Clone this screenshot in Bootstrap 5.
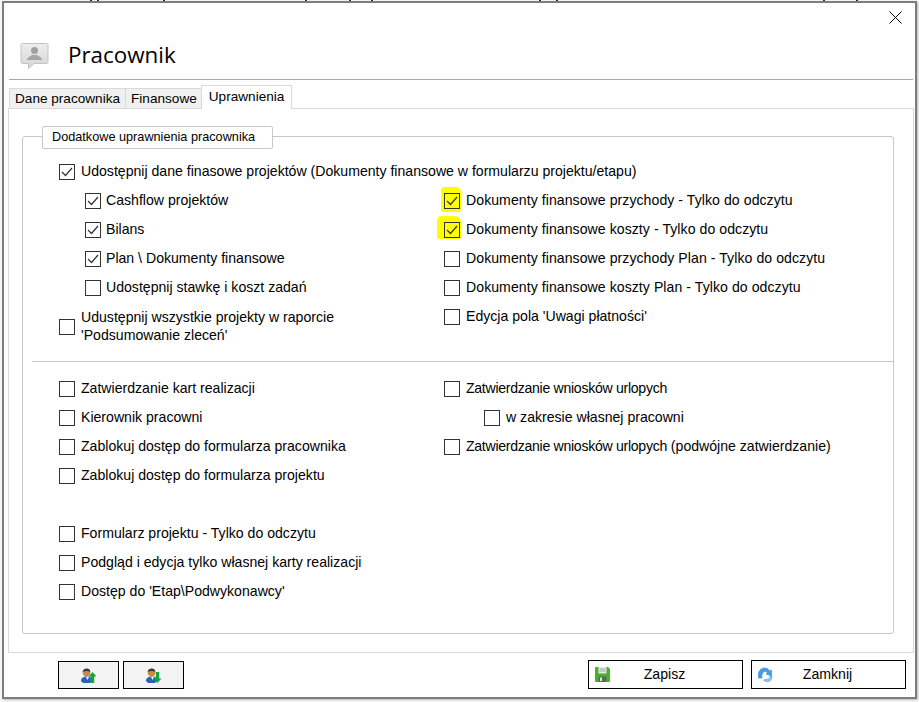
<!DOCTYPE html>
<html lang="pl">
<head>
<meta charset="utf-8">
<title>Pracownik</title>
<link href="https://cdn.jsdelivr.net/npm/bootstrap@5.3.0/dist/css/bootstrap.min.css" rel="stylesheet">
<style>
html,body{height:100%;}
body{background:#f7f7f7;font-family:"Liberation Sans",Arial,sans-serif;font-size:14.1px;color:#000;padding:1px 0 0 2px;overflow:hidden;position:relative;}
.mk{position:absolute;top:0;width:2px;height:1px;background:#1b2a6b;}
.win{position:relative;width:915px;height:698px;background:#fff;border:2px solid #7d7d7d;box-shadow:1px 1px 2px rgba(0,0,0,.25);}
.closex{height:31px;padding:8px 13px 0 0;}
.headrow{height:46px;border-bottom:1px solid #a9a9a9;margin:0 2px 0 5px;padding:0 0 0 11px;}
.headrow h1{font-family:"Open Sans",sans-serif;font-size:22.4px;font-weight:400;margin:0 0 2px 18px;}
.tabstrip{margin:6px 0 0 5px;height:22px;font-size:13.6px;}
.tabi{background:#f0f0f0;border:1px solid #d9d9d9;border-bottom:0;border-left-width:0;height:20px;margin-top:2px;padding:0 5px;line-height:20px;white-space:nowrap;}
.tabi:first-child{border-left-width:1px;}
.tabi.on{background:#fff;height:24px;margin:-1px 0 0 -2px;position:relative;z-index:1;padding:0 7px;line-height:21px;border-left-width:1px;}
.tabpanel{margin:0 1px 0 4px;height:545px;border:1px solid #d9d9d9;padding:27px 19px 0 13px;}
.groupb{position:relative;height:498px;border:1px solid #c8c8c8;border-radius:3px;padding:27px 0 0 36px;}
.legendb{position:absolute;left:19px;top:-11px;width:231px;height:23px;background:#fff;border:1px solid #c8c8c8;border-radius:2px;padding-left:9px;line-height:21px;white-space:nowrap;font-size:12.7px;}
.rowc{height:29px;}
.colL{width:385px;}
.ind{padding-left:26px;}
.ind .chk{gap:5px;}
.subr{padding-left:40px;}
.chk{display:flex;align-items:center;gap:6px;height:16px;white-space:nowrap;position:relative;}
.bx{width:16px;height:16px;border:1px solid #333;background:#fff;flex:none;display:flex;align-items:center;justify-content:center;position:relative;}
.bx svg{display:block;}
.bx.yl{background:#ffff00;}
.hla,.hlb{position:absolute;background:#ffff00;}
.hla{left:-3px;top:-6px;width:20px;height:25px;border-radius:3px 5px 2px 2px;}
.hlb{left:-7px;top:-6px;width:24px;height:23px;border-radius:5px 6px 2px 2px;}
.tall{height:52px;}
.tall .two{height:36px;line-height:18px;}
.twotxt{margin-top:-2px;}
.wide{letter-spacing:.055px;}
.tight{letter-spacing:-.29px;}
.sep{height:1px;background:#c8c8c8;margin:0 0 19px -27px;width:861px;}
.gapr{height:29px;}
.foot{padding:7px 0 0 54px;}
.bt{border:1px solid #000;display:flex;align-items:center;justify-content:center;position:relative;}
.bt.sm{width:61px;height:28px;margin-top:1px;background:#f3f3f3;}
.bt.lg{width:155px;height:29px;background:#fff;padding-right:2px;}
.bt.lg svg{position:absolute;left:6px;top:6px;}
.gaps{width:396px;}
</style>
</head>
<body>
<i class="mk" style="left:90px"></i><i class="mk" style="left:97px"></i><i class="mk" style="left:163px"></i><i class="mk" style="left:305px"></i><i class="mk" style="left:349px"></i><i class="mk" style="left:371px"></i><i class="mk" style="left:539px"></i><i class="mk" style="left:556px"></i><i class="mk" style="left:823px"></i><i class="mk" style="left:856px"></i>
<div class="win d-flex flex-column">
  <div class="closex d-flex justify-content-end">
    <svg width="13" height="13" viewBox="0 0 13 13"><path d="M.5.500l12 12M12.500.500l-12 12" stroke="#000" fill="none"/></svg>
  </div>
  <div class="headrow d-flex align-items-center">
    <svg width="30" height="30" viewBox="0 0 30 30"><defs><linearGradient id="g" x1="0" y1="0" x2="0" y2="1"><stop offset="0" stop-color="#eeeeee"/><stop offset="1" stop-color="#d4d4d4"/></linearGradient></defs><path d="M2.500 1.500h24a1.500 1.500 0 0 1 1.500 1.500v17a1.500 1.500 0 0 1-1.500 1.500H14l-5.500 5v-5h-6a1.500 1.500 0 0 1-1.500-1.500V3a1.500 1.500 0 0 1 1.500-1.500z" fill="url(#g)" stroke="#c4c4c4"/><circle cx="14.500" cy="8.500" r="3.500" fill="#a0a0a0"/><path d="M7 18c0-3 3.500-3.500 5-5h5c1.500 1.500 5 2 5 5z" fill="#a6a6a6"/></svg>
    <h1>Pracownik</h1>
  </div>
  <div class="tabstrip d-flex">
    <div class="tabi">Dane pracownika</div>
    <div class="tabi">Finansowe</div>
    <div class="tabi on">Uprawnienia</div>
  </div>
  <div class="tabpanel">
    <div class="groupb">
      <div class="legendb">Dodatkowe uprawnienia pracownika</div>
      <div class="rowc"><label class="chk"><span class="bx"><svg width="12" height="10" viewBox="0 0 12 10"><path d="M1 5l3.500 3.500L11 1" fill="none" stroke="#333" stroke-width="1.200"/></svg></span>Udostępnij dane finasowe projektów (Dokumenty finansowe w formularzu projektu/etapu)</label></div>
      <div class="rowc d-flex">
        <div class="colL ind"><label class="chk"><span class="bx"><svg width="12" height="10" viewBox="0 0 12 10"><path d="M1 5l3.500 3.500L11 1" fill="none" stroke="#333" stroke-width="1.200"/></svg></span>Cashflow projektów</label></div>
        <div><label class="chk wide"><span class="hla"></span><span class="bx yl"><svg width="12" height="10" viewBox="0 0 12 10"><path d="M1 5l3.500 3.500L11 1" fill="none" stroke="#333" stroke-width="1.200"/></svg></span>Dokumenty finansowe przychody - Tylko do odczytu</label></div>
      </div>
      <div class="rowc d-flex">
        <div class="colL ind"><label class="chk"><span class="bx"><svg width="12" height="10" viewBox="0 0 12 10"><path d="M1 5l3.500 3.500L11 1" fill="none" stroke="#333" stroke-width="1.200"/></svg></span>Bilans</label></div>
        <div><label class="chk wide"><span class="hlb"></span><span class="bx yl"><svg width="12" height="10" viewBox="0 0 12 10"><path d="M1 5l3.500 3.500L11 1" fill="none" stroke="#333" stroke-width="1.200"/></svg></span>Dokumenty finansowe koszty - Tylko do odczytu</label></div>
      </div>
      <div class="rowc d-flex">
        <div class="colL ind"><label class="chk"><span class="bx"><svg width="12" height="10" viewBox="0 0 12 10"><path d="M1 5l3.500 3.500L11 1" fill="none" stroke="#333" stroke-width="1.200"/></svg></span>Plan \ Dokumenty finansowe</label></div>
        <div><label class="chk wide"><span class="bx"></span>Dokumenty finansowe przychody Plan - Tylko do odczytu</label></div>
      </div>
      <div class="rowc d-flex">
        <div class="colL ind"><label class="chk"><span class="bx"></span>Udostępnij stawkę i koszt zadań</label></div>
        <div><label class="chk wide"><span class="bx"></span>Dokumenty finansowe koszty Plan - Tylko do odczytu</label></div>
      </div>
      <div class="tall d-flex">
        <div class="colL"><label class="chk two"><span class="bx"></span><span class="twotxt">Udustępnij wszystkie projekty w raporcie<br>'Podsumowanie zleceń'</span></label></div>
        <div><label class="chk"><span class="bx"></span>Edycja pola 'Uwagi płatności'</label></div>
      </div>
      <div class="sep"></div>
      <div class="rowc d-flex"><div class="colL"><label class="chk"><span class="bx"></span>Zatwierdzanie kart realizacji</label></div><div><label class="chk tight"><span class="bx"></span>Zatwierdzanie wniosków urlopych</label></div></div>
      <div class="rowc d-flex"><div class="colL"><label class="chk"><span class="bx"></span>Kierownik pracowni</label></div><div class="subr"><label class="chk"><span class="bx"></span>w zakresie własnej pracowni</label></div></div>
      <div class="rowc d-flex"><div class="colL"><label class="chk"><span class="bx"></span>Zablokuj dostęp do formularza pracownika</label></div><div><label class="chk"><span class="bx"></span><span><span class="tight">Zatwierdzanie wniosków urlopych</span> (podwójne zatwierdzanie)</span></label></div></div>
      <div class="rowc"><label class="chk"><span class="bx"></span>Zablokuj dostęp do formularza projektu</label></div>
      <div class="gapr"></div>
      <div class="rowc"><label class="chk"><span class="bx"></span>Formularz projektu - Tylko do odczytu</label></div>
      <div class="rowc"><label class="chk"><span class="bx"></span>Podgląd i edycja tylko własnej karty realizacji</label></div>
      <div class="rowc"><label class="chk"><span class="bx"></span>Dostęp do 'Etap\Podwykonawcy'</label></div>
    </div>
  </div>
  <div class="foot d-flex gap-1">
    <div class="bt sm">
      <svg width="17" height="17" viewBox="0 0 17 17"><path d="M1 14c0-3 2-3.500 4-4.500h4c2 1 3 1.500 3 4.500l-2 2H3z" fill="#2a62b8"/><path d="M6 10l1.500 3L9 10z" fill="#fff"/><circle cx="6.500" cy="5.500" r="3.800" fill="#c98a3c"/><path d="M2.700 5c0-4 7.500-5 7.600 0-2-1.500-5.600-1.500-7.600 0z" fill="#3a3a3a"/><path d="M12.500 5l4 4.500H14.200V16h-3.400V9.500H8.500z" fill="#12a838"/></svg>
    </div>
    <div class="bt sm">
      <svg width="17" height="17" viewBox="0 0 17 17"><path d="M1 14c0-3 2-3.500 4-4.500h4c2 1 3 1.500 3 4.500l-2 2H3z" fill="#2a62b8"/><path d="M6 10l1.500 3L9 10z" fill="#fff"/><circle cx="6.500" cy="5.500" r="3.800" fill="#c98a3c"/><path d="M2.700 5c0-4 7.500-5 7.600 0-2-1.500-5.600-1.500-7.600 0z" fill="#3a3a3a"/><path d="M12.500 16l4-4.500H14.200V5h-3.400v6.500H8.500z" fill="#12a838"/></svg>
    </div>
    <div class="gaps"></div>
    <div class="bt lg">
      <svg width="15" height="15" viewBox="0 0 15 15"><path d="M1 0h12l2 2v12a1 1 0 0 1-1 1H1a1 1 0 0 1-1-1V1a1 1 0 0 1 1-1z" fill="#4bb02c"/><path d="M3.500 0h8v6.500h-8z" fill="#e8e8e8"/><path d="M4.500 2h6M4.500 4h6" stroke="#a8a8a8"/><path d="M3.500 9.500h8V15h-8z" fill="#5a6a5a"/><path d="M5 10.500h2V14H5z" fill="#dfe8df"/></svg>
      Zapisz
    </div>
    <div class="bt lg ms-1">
      <svg width="15" height="15" viewBox="0 0 15 15"><path d="M.5 11C-.5 6 1.500 1.500 6 1c2.500-.3 4.500 1 5.300 3L13.500 3v6L8 7l1.500-1C9 4.800 7.800 4.200 6.500 4.500 4.500 5 3.500 7.500 4 11z" fill="#4a9be8" stroke="#2b78c8" stroke-width=".5"/><path d="M14 9c.3 3.500-2 5.800-5 5.700-1.500 0-2.700-.7-3.500-1.700l3-.7c1.800.5 3.300-.8 3.500-3.300z" fill="#8cc4f4" stroke="#3a88d8" stroke-width=".5"/></svg>
      Zamknij
    </div>
  </div>
</div>
</body>
</html>
